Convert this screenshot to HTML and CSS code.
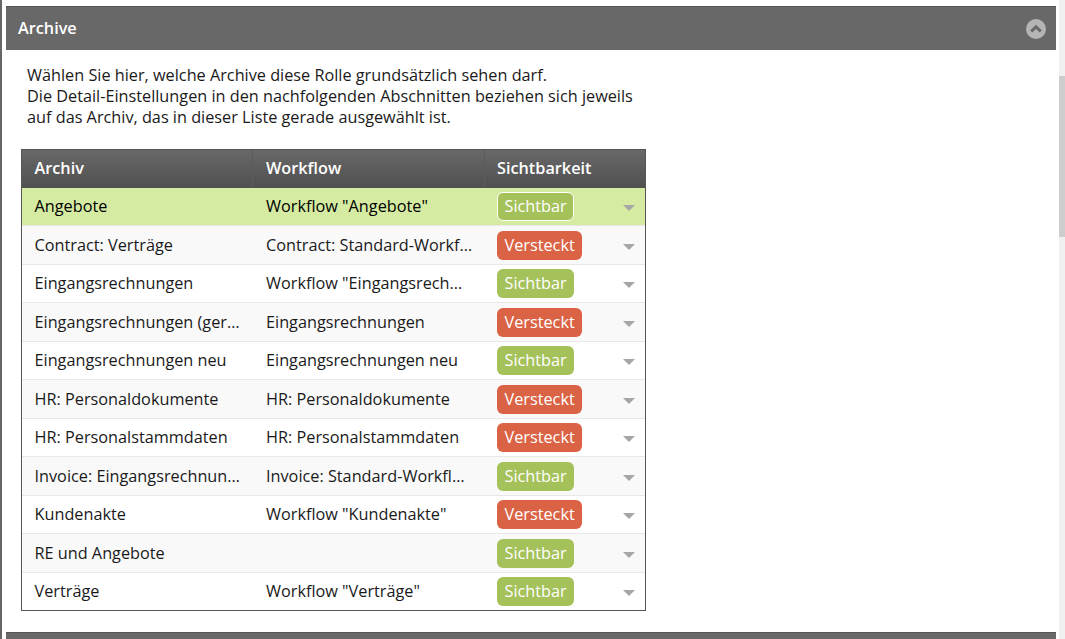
FILE: index.html
```html
<!DOCTYPE html>
<html lang="de">
<head>
<meta charset="utf-8">
<title>Archive</title>
<link rel="stylesheet" href="styles.css">
</head>
<body>
<div class="page">
  <main class="content">
    <section class="panel">
      <header class="panel-head">
        <h2>Archive</h2>
        <span class="collapse"><svg width="20" height="20" viewBox="0 0 20 20"><circle cx="10" cy="10" r="10" fill="#b5b5b5"/><path d="M5.2 12.4 10 7.8l4.800 4.600" fill="none" stroke="#6a6a6a" stroke-width="3"/></svg></span>
      </header>
      <div class="panel-body">
        <p class="intro">Wählen Sie hier, welche Archive diese Rolle grundsätzlich sehen darf.<br>Die Detail-Einstellungen in den nachfolgenden Abschnitten beziehen sich jeweils<br>auf das Archiv, das in dieser Liste gerade ausgewählt ist.</p>
        <div class="grid">
          <div class="row head"><div class="c c1">Archiv</div><div class="c c2">Workflow</div><div class="c c3">Sichtbarkeit</div></div>
          <div class="row selected"><div class="c c1">Angebote</div><div class="c c2">Workflow "Angebote"</div><div class="c c3"><span class="tag on outlined">Sichtbar</span><i class="arrow"></i></div></div>
          <div class="row alt"><div class="c c1">Contract: Verträge</div><div class="c c2">Contract: Standard-Workf…</div><div class="c c3"><span class="tag off">Versteckt</span><i class="arrow"></i></div></div>
          <div class="row"><div class="c c1">Eingangsrechnungen</div><div class="c c2">Workflow "Eingangsrech…</div><div class="c c3"><span class="tag on">Sichtbar</span><i class="arrow"></i></div></div>
          <div class="row alt"><div class="c c1">Eingangsrechnungen (ger…</div><div class="c c2">Eingangsrechnungen</div><div class="c c3"><span class="tag off">Versteckt</span><i class="arrow"></i></div></div>
          <div class="row"><div class="c c1">Eingangsrechnungen neu</div><div class="c c2">Eingangsrechnungen neu</div><div class="c c3"><span class="tag on">Sichtbar</span><i class="arrow"></i></div></div>
          <div class="row alt"><div class="c c1">HR: Personaldokumente</div><div class="c c2">HR: Personaldokumente</div><div class="c c3"><span class="tag off">Versteckt</span><i class="arrow"></i></div></div>
          <div class="row"><div class="c c1">HR: Personalstammdaten</div><div class="c c2">HR: Personalstammdaten</div><div class="c c3"><span class="tag off">Versteckt</span><i class="arrow"></i></div></div>
          <div class="row alt"><div class="c c1">Invoice: Eingangsrechnun…</div><div class="c c2">Invoice: Standard-Workfl…</div><div class="c c3"><span class="tag on">Sichtbar</span><i class="arrow"></i></div></div>
          <div class="row"><div class="c c1">Kundenakte</div><div class="c c2">Workflow "Kundenakte"</div><div class="c c3"><span class="tag off">Versteckt</span><i class="arrow"></i></div></div>
          <div class="row alt"><div class="c c1">RE und Angebote</div><div class="c c2"></div><div class="c c3"><span class="tag on">Sichtbar</span><i class="arrow"></i></div></div>
          <div class="row"><div class="c c1">Verträge</div><div class="c c2">Workflow "Verträge"</div><div class="c c3"><span class="tag on">Sichtbar</span><i class="arrow"></i></div></div>
        </div>
      </div>
    </section>
    <section class="panel-next"></section>
  </main>
  <div class="scrollbar"><div class="thumb"></div></div>
</div>
</body>
</html>
```
FILE: styles.css
```css
* { box-sizing: border-box; }
html, body { margin: 0; height: 100%; overflow: hidden; background: #fff; }
body { font-family: "Open Sans", sans-serif; font-size: 16.25px; color: #1a1a1a; }
.page { display: flex; height: 639px; border-left: 2px solid #666; }
.content { flex: 1; padding: 6px 3px 0 4px; min-width: 0; overflow: hidden; }
.panel-head {
  height: 44px; display: flex; align-items: center; justify-content: space-between;
  padding: 0 10px 0 12px; background: #686868; border-top: 1px solid #555; color: #fff;
}
.panel-head h2 { margin: 0 0 2px; font-size: 16.25px; font-weight: 600; line-height: 40px; }
.collapse { display: flex; }
.panel-body { padding: 15px 0 0 15px; height: 582px; }
.intro { margin: 0 0 21px 6px; line-height: 21px; width: 640px; }
.grid { width: 625px; border: 1px solid #555; }
.row { display: flex; height: 38.5px; align-items: center; border-bottom: 1px solid #e8e8e8; background: #fff; color: #1a1a1a; }
.row:last-child { border-bottom: 0; height: 37.5px; }
.row.alt { background: #f9f9f9; }
.row.selected { background: #d5eba2; color: #000; }
.row.head { height: 37.5px; background: linear-gradient(#686868, #505050); color: #fff; font-weight: 600; border-bottom: 0; }
.c { padding-left: 12.5px; height: 100%; min-width: 0; }
.c1 { width: 231px; padding-top: 0.5px; }
.c2 { width: 232px; padding-left: 13px; padding-top: 0.5px; }
.c3 { flex: 1; position: relative; display: flex; align-items: center; padding-left: 12px; padding-top: 0.6px; }
.c1, .c2 { line-height: 37px; white-space: nowrap; }
.head .c { display: block; padding-top: 0; line-height: 37px; }
.head .c1, .head .c2 { border-right: 1px solid #5c5c5c; }
.tag { display: inline-block; height: 29px; line-height: 27px; padding: 0 6.5px; border-radius: 6px; color: #fff; border: 1px solid transparent; }
.tag.on { background: #a4c15a; }
.tag.off { background: #db6345; }
.tag.outlined { border-color: #fff; }
.arrow { position: absolute; right: 10.5px; top: 17.5px; width: 0; height: 0; border-left: 6px solid transparent; border-right: 6px solid transparent; border-top: 6px solid #a6a6a6; }
.panel-next { height: 20px; background: #686868; border-top: 1px solid #555; }
.scrollbar { width: 6px; background: #f0f0f0; padding-top: 76px; flex: none; }
.thumb { height: 161px; background: #cdcdcd; }
```
